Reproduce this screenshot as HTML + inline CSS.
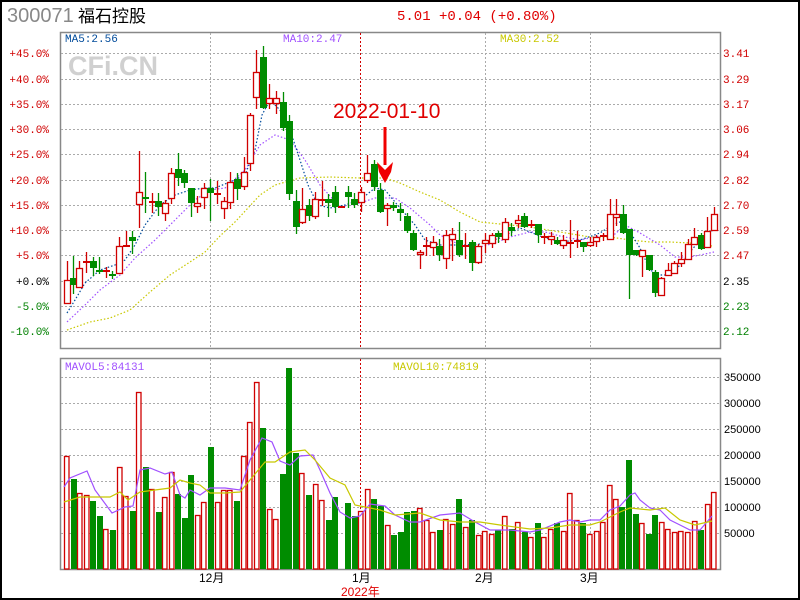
<!DOCTYPE html>
<html><head><meta charset="utf-8"><style>
html,body{margin:0;padding:0;background:#fff;}
body{width:800px;height:600px;overflow:hidden;position:relative;font-family:"Liberation Sans","Noto Sans CJK SC",sans-serif;}
#frame{position:absolute;left:0;top:0;width:796px;height:596px;border:2px solid #000;}
</style></head><body>
<div id="frame"></div>
<svg id="s" width="800" height="600" style="position:absolute;left:0;top:0" xmlns="http://www.w3.org/2000/svg">
<text x="7" y="22" font-size="20" fill="#888" font-family="Liberation Sans,sans-serif">300071</text>
<text x="78" y="22" font-size="17" fill="#000" font-family="Liberation Sans,'Noto Sans CJK SC',sans-serif">福石控股</text>
<text x="397" y="20" font-size="14" fill="#e00000" font-family="Liberation Mono,'Noto Sans CJK SC',monospace">5.01 +0.04 (+0.80%)</text>
<rect x="60.5" y="32.5" width="660" height="316" fill="none" stroke="#888" stroke-width="1.5"/>
<rect x="60.5" y="358.5" width="660" height="211" fill="none" stroke="#888" stroke-width="1.5"/>
<g id="grid" stroke="#aaa" stroke-dasharray="2,2" stroke-width="1"></g>
<text x="68" y="75" font-size="27" font-weight="bold" fill="#d0d0d0" font-family="Liberation Sans,sans-serif">CFi.CN</text>
<g font-family="Liberation Mono,monospace" font-size="11">
<text x="65" y="42" fill="#004b9b">MA5:2.56</text>
<text x="283" y="42" fill="#a050ff">MA10:2.47</text>
<text x="500" y="42" fill="#c8c800">MA30:2.52</text>
<text x="65" y="370" fill="#a050ff">MAVOL5:84131</text>
<text x="393" y="370" fill="#c8c800">MAVOL10:74819</text>
</g>
<g id="lab" font-family="Liberation Mono,monospace" font-size="11"></g>
<g id="ma" fill="none" stroke-width="1.2"></g>
<g id="cd"></g>
<g id="vol"></g>
<text x="333" y="118" font-size="21" fill="#e00000" font-family="Liberation Sans,sans-serif">2022-01-10</text>
<rect x="383.5" y="127" width="3" height="38" fill="#f00000"/>
<polygon points="377,162 385,170 393,162 391,172 385,183 379,172" fill="#f00000"/>
<g font-size="12" fill="#000" font-family="Liberation Sans,'Noto Sans CJK SC',sans-serif">
<text x="199" y="582">12月</text><text x="352" y="582">1月</text><text x="475" y="582">2月</text><text x="580" y="582">3月</text>
</g>
<text x="341" y="596" font-size="12" fill="#e00000" font-family="Liberation Sans,'Noto Sans CJK SC',sans-serif">2022年</text>
</svg>
<script>
var NS="http://www.w3.org/2000/svg";
function el(p,t,a){var e=document.createElementNS(NS,t);for(var k in a)e.setAttribute(k,a[k]);document.getElementById(p).appendChild(e);return e;}
var gy=[53,79,104,129,154,180,205,230,255,281,306,331];
gy.forEach(function(y){el('grid','line',{x1:61,x2:720,y1:y+.5,y2:y+.5});});
[377,403,429,455,481,507,533].forEach(function(y){el('grid','line',{x1:61,x2:720,y1:y+.5,y2:y+.5});});
[210,485,590].forEach(function(x){el('grid','line',{x1:x+.5,x2:x+.5,y1:33,y2:348});el('grid','line',{x1:x+.5,x2:x+.5,y1:359,y2:569});});
el('grid','line',{x1:360.5,x2:360.5,y1:33,y2:348,stroke:'#d00000'});
el('grid','line',{x1:360.5,x2:360.5,y1:359,y2:569,stroke:'#d00000'});
var L=["+45.0%","+40.0%","+35.0%","+30.0%","+25.0%","+20.0%","+15.0%","+10.0%","+5.0%","+0.0%","-5.0%","-10.0%"];
var R=["3.41","3.29","3.17","3.06","2.94","2.82","2.70","2.59","2.47","2.35","2.23","2.12"];
gy.forEach(function(y,i){
 var c=i<9?'#d00000':(i==9?'#000':'#008000');
 var t=el('lab','text',{x:49,y:y+4,'text-anchor':'end',fill:c});t.textContent=L[i];
 var t2=el('lab','text',{x:723,y:y+4,fill:c});t2.textContent=R[i];
});
var vl=["350000","300000","250000","200000","150000","100000","50000"];
[377,403,429,455,481,507,533].forEach(function(y,i){var t=el('lab','text',{x:724,y:y+4,fill:'#000','font-family':'Liberation Sans,sans-serif','font-size':11});t.textContent=vl[i];});
var C=[[67,1,280,303,261,303],[73,0,278,285,256,293],[79,1,268,287,261,287],[86,1,262,263,252,272],[93,0,261,268,257,275],[99,0,270,272,257,273],[106,1,271,272,267,277],[112,0,274,276,271,278],[119,1,246,273,237,273],[126,1,246,246,231,246],[132,0,237,241,231,253],[139,1,192,204,151,227],[145,0,197,199,172,212],[152,1,202,202,193,212],[158,0,201,207,193,215],[165,1,203,213,200,220],[171,1,173,198,168,203],[178,0,169,178,153,185],[184,0,173,183,170,187],[191,0,188,203,188,216],[197,1,203,206,196,212],[204,1,188,197,183,208],[210,0,188,193,179,220],[217,1,194,195,181,203],[224,1,201,208,197,218],[230,1,182,202,172,208],[237,0,179,189,173,199],[244,1,172,186,157,189],[250,1,115,163,113,170],[256,1,72,97,50,108],[263,0,57,108,46,108],[269,1,98,103,84,108],[276,1,98,103,91,113],[283,0,102,128,92,130],[289,0,121,194,115,199],[296,0,201,227,190,233],[302,1,209,222,188,223],[309,0,205,216,199,220],[315,1,199,216,192,218],[322,1,200,200,181,205],[328,0,199,203,194,216],[335,0,192,207,186,212],[341,1,207,207,207,207],[348,0,192,197,186,207],[354,0,199,205,193,207],[361,1,192,202,187,211],[367,1,173,180,155,182],[374,0,164,187,160,190],[380,0,190,212,183,212],[387,1,205,208,203,225],[393,0,205,208,202,210],[400,0,209,213,203,220],[407,0,216,231,213,232],[413,0,233,250,230,250],[420,1,252,254,250,268],[426,1,246,246,237,255],[433,1,242,247,236,255],[439,0,246,255,239,260],[446,1,235,258,230,268],[452,1,234,239,228,260],[459,0,240,255,222,256],[465,1,246,246,233,258],[472,0,242,263,240,270],[478,1,246,262,244,263],[485,1,240,243,233,252],[492,1,235,243,233,247],[498,0,233,237,231,242],[505,1,222,239,218,242],[511,0,227,231,223,235],[518,1,220,223,215,227],[524,0,216,227,213,227],[531,1,225,225,220,227],[538,0,224,235,224,242],[544,1,237,237,233,243],[551,1,236,239,232,244],[557,0,240,244,237,244],[563,1,240,245,235,248],[570,1,243,243,220,257],[577,1,241,241,231,247],[583,0,242,247,242,251],[590,1,242,245,237,246],[596,1,237,241,235,246],[603,1,236,236,233,240],[610,1,214,239,199,239],[616,1,214,217,199,225],[623,0,214,233,205,233],[629,0,229,255,229,298],[636,0,250,255,250,255],[642,1,250,256,250,276],[649,0,255,270,255,270],[655,0,272,293,270,296],[661,1,278,295,277,295],[668,1,270,275,263,275],[674,1,263,273,261,273],[681,1,259,263,252,266],[688,1,244,259,239,259],[694,1,237,244,228,244],[701,0,235,249,233,249],[707,1,231,247,217,247],[714,1,214,230,207,230]];
C.forEach(function(c){
 var col=c[1]?'#d00000':'#008c00';
 el('cd','line',{x1:c[0]+.5,x2:c[0]+.5,y1:c[4],y2:c[5]+1,stroke:col,'stroke-width':1.3});
 var h=Math.max(c[3]-c[2],1);
 if(c[1]){ if(h<=1) el('cd','rect',{x:c[0]-3,y:c[2]-1,width:7,height:2,fill:col});
   else el('cd','rect',{x:c[0]-2.5,y:c[2]+.5,width:6,height:h,fill:'#fff',stroke:col,'stroke-width':1.3});}
 else el('cd','rect',{x:c[0]-3,y:c[2],width:7,height:Math.max(h,2),fill:col});
});
var V=[[64,456,1],[71,479,0],[77,493,1],[84,495,1],[90,501,0],[97,516,0],[103,529,1],[110,530,0],[117,467,1],[123,496,1],[130,511,0],[136,392,1],[143,467,0],[149,489,1],[156,512,0],[162,497,1],[169,472,1],[175,494,0],[182,518,0],[188,475,0],[195,515,1],[201,502,1],[208,447,0],[215,502,1],[221,490,1],[227,490,1],[234,501,0],[241,456,1],[247,422,1],[254,382,1],[260,428,0],[267,509,1],[273,519,1],[280,474,0],[286,368,0],[293,453,0],[299,473,1],[306,495,0],[313,484,1],[319,500,1],[326,520,0],[332,497,0],[345,503,0],[352,516,0],[358,511,1],[365,489,1],[371,499,0],[378,506,0],[385,525,1],[391,535,0],[398,532,0],[404,512,0],[411,511,0],[417,508,1],[424,520,1],[430,532,1],[437,530,0],[443,519,1],[450,524,1],[456,499,0],[463,527,1],[469,520,0],[476,535,1],[482,531,1],[489,534,1],[495,530,0],[502,516,1],[509,529,0],[515,522,1],[522,532,0],[528,537,1],[535,523,0],[541,537,1],[548,529,1],[554,523,0],[561,531,1],[567,493,1],[574,520,1],[580,523,0],[587,534,1],[594,531,1],[600,522,1],[607,485,1],[613,499,1],[619,507,0],[626,460,0],[633,514,0],[639,523,1],[646,534,0],[652,515,0],[659,522,1],[665,529,1],[672,532,1],[678,531,1],[685,532,1],[692,521,1],[698,530,0],[705,504,1],[711,492,1]];
V.forEach(function(v){
 if(v[2]) el('vol','rect',{x:v[0]+.5,y:v[1]+.5,width:4.5,height:569-v[1]-.5,fill:'#fff',stroke:'#d00000','stroke-width':1.3});
 else el('vol','rect',{x:v[0],y:v[1],width:6,height:569-v[1],fill:'#008c00'});
});
function pl(pts,col,dash,g){var s=pts.map(function(p){return p.join(',');}).join(' ');var a={points:s,stroke:col,fill:'none','stroke-width':1.2};if(dash)a['stroke-dasharray']='1.5,2';el(g||'ma','polyline',a);}
pl([[67,330],[90,322],[110,318],[130,310],[150,292],[170,275],[190,262],[205,252],[220,236],[235,222],[248,208],[260,195],[275,185],[300,178],[330,177],[360,178],[385,178],[400,183],[420,192],[440,200],[460,212],[480,222],[500,224],[530,227],[560,232],[590,237],[610,237],[630,240],[650,242],[670,242],[690,243],[712,246]],'#c8c800',1);
pl([[67,322],[85,305],[100,290],[120,275],[135,258],[155,240],[175,220],[195,200],[210,190],[225,188],[245,170],[260,145],[275,135],[290,140],[305,160],[320,185],[340,207],[360,203],[375,198],[395,198],[410,208],[430,225],[440,235],[460,245],[480,247],[495,243],[510,237],[530,232],[545,232],[560,236],[580,240],[600,236],[615,234],[625,225],[640,233],[660,245],[675,257],[690,257],[705,254],[714,252]],'#a050ff',1);
pl([[67,313],[75,300],[85,283],[100,270],[115,265],[125,260],[135,245],[145,225],[160,205],[175,195],[190,190],[205,188],[215,188],[230,182],[245,175],[255,150],[262,115],[270,100],[280,110],[290,130],[300,160],[308,185],[318,205],[330,208],[345,205],[360,200],[375,188],[385,190],[400,208],[415,225],[425,240],[440,245],[460,245],[480,244],[500,238],[520,228],[540,236],[560,242],[580,240],[600,233],[612,225],[620,222],[630,232],[640,248],[650,270],[660,275],[670,275],[680,265],[690,252],[700,240],[713,230]],'#004b9b',1);
pl([[64,487],[70,478],[87,471],[95,490],[112,513],[125,507],[133,506],[140,470],[150,468],[165,474],[172,472],[180,495],[185,498],[190,490],[200,495],[210,488],[225,488],[240,490],[250,460],[262,438],[272,442],[280,461],[290,465],[300,456],[313,455],[320,470],[330,493],[340,512],[350,518],[360,516],[370,504],[385,506],[395,515],[410,522],[420,522],[440,515],[460,513],[475,522],[490,530],[510,530],[530,532],[540,530],[560,522],[570,520],[580,522],[590,520],[600,520],[610,510],[620,506],[630,495],[635,493],[640,500],[650,508],[660,510],[670,520],[680,525],[690,530],[700,530],[712,516]],'#a050ff',0,'vol');
pl([[64,502],[80,497],[110,497],[120,492],[128,500],[140,492],[155,490],[170,488],[180,480],[190,483],[200,485],[210,493],[225,493],[240,492],[250,480],[265,462],[275,462],[290,452],[305,450],[315,460],[330,478],[345,485],[355,505],[365,507],[380,510],[395,515],[420,513],[440,520],[460,522],[480,522],[500,525],[530,529],[550,528],[570,525],[590,525],[600,522],[620,512],[630,508],[650,510],[665,508],[680,520],[695,525],[712,521]],'#c8c800',0,'vol');
</script>
</body></html>
